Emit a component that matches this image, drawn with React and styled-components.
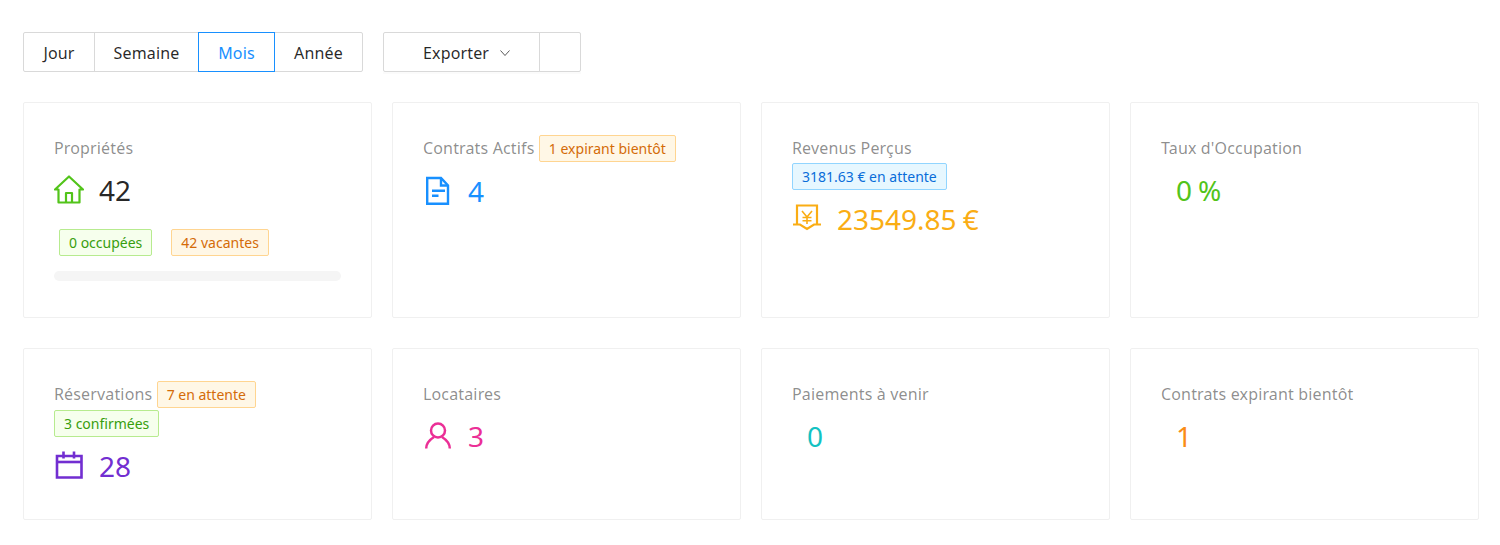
import styled, { createGlobalStyle } from "styled-components";

const GlobalStyle = createGlobalStyle`
  body {
    margin: 0;
    background: #fff;
    font-family: "Noto Sans", "Open Sans", sans-serif;
    font-size: 16px;
    letter-spacing: 0.15px;
    color: rgba(0, 0, 0, 0.85);
  }
`

const Page = styled.div`
  padding: 32px 21px 24px 23px;
`

const Toolbar = styled.div`
  display: flex;
  gap: 20px;
  margin-bottom: 30px;
`

const RadioGroup = styled.div`
  display: flex;
  height: 40px;
`

const RadioButton = styled.div`
  box-sizing: border-box;
  display: flex;
  align-items: center;
  justify-content: center;
  width: ${p => p.$width}px;
  margin-left: -1px;
  padding-top: 2px;
  border: 1px solid ${p => p.$active ? "#1890ff" : "#d9d9d9"};
  color: ${p => p.$active ? "#1890ff" : "rgba(0, 0, 0, 0.85)"};
  background: #fff;
  z-index: ${p => p.$active ? 1 : 0};

  &:first-child {
    margin-left: 0;
    border-radius: 2px 0 0 2px;
  }

  &:last-child {
    border-radius: 0 2px 2px 0;
  }
`

const ExportGroup = styled.div`
  display: flex;
  height: 40px;
  box-shadow: 0 2px 0 rgba(0, 0, 0, 0.015);
`

const ExportButton = styled.div`
  box-sizing: border-box;
  display: flex;
  align-items: center;
  gap: 10px;
  width: 157px;
  padding: 2px 0 0 39px;
  border: 1px solid #d9d9d9;
  border-radius: 2px 0 0 2px;
`

const ExportExtra = styled.div`
  box-sizing: border-box;
  width: 42px;
  margin-left: -1px;
  border: 1px solid #d9d9d9;
  border-radius: 0 2px 2px 0;
`

const Grid = styled.div`
  display: grid;
  grid-template-columns: repeat(4, 349px);
  column-gap: 20px;
  row-gap: 30px;
`

const Card = styled.div`
  box-sizing: border-box;
  padding: 30px;
  border: 1px solid #f0f0f0;
  border-radius: 2px;
  height: ${p => p.$height}px;
`

const Title = styled.div`
  color: rgba(0, 0, 0, 0.45);
  padding-top: 1px;
  line-height: 28px;
  margin-bottom: 8px;
`

const Tag = styled.span`
  box-sizing: border-box;
  display: inline-block;
  height: 27px;
  line-height: 25px;
  padding: 0 9px;
  margin: 1px 8px 1px 0;
  font-size: 14px;
  letter-spacing: 0;
  border: 1px solid ${p => p.$border};
  border-radius: 2px;
  background: ${p => p.$bg};
  color: ${p => p.$color};
  vertical-align: top;
`

const OrangeTag = styled(Tag).attrs({ $border: "#ffd591", $bg: "#fff7e6", $color: "#d46b08" })``
const GreenTag = styled(Tag).attrs({ $border: "#b7eb8f", $bg: "#f6ffed", $color: "#389e0d" })``
const BlueTag = styled(Tag).attrs({ $border: "#91d5ff", $bg: "#e6f7ff", $color: "#096dd9" })``

const Value = styled.div`
  display: flex;
  align-items: center;
  height: 40px;
  margin-bottom: 2px;
  font-size: 28px;
  letter-spacing: 0;
  color: ${p => p.$color};
`

const Prefix = styled.span`
  display: inline-flex;
  margin-right: 15px;
  color: ${p => p.$color || "inherit"};
`

const Unit = styled.span`
  margin-left: 6px;
`

const TagRow = styled.div`
  display: flex;
  gap: 19px;
  margin: 19px 0 15px 5px;

  ${Tag} {
    margin: 0;
  }
`

const Progress = styled.div`
  height: 10px;
  border-radius: 100px;
  background: #f5f5f5;
`

const HomeIcon = () => (
  <svg width="30" height="30" viewBox="0 0 30 30" fill="none" stroke="currentColor" strokeWidth="2.2" strokeLinejoin="round">
    <path d="M15 1.5 L29 14.5 H25.5 V27.5 H4.5 V14.5 H1 Z" />
    <path d="M12 27.5 V18 H18 V27.5" />
  </svg>
)

const FileIcon = () => (
  <svg width="30" height="30" viewBox="0 0 30 30" fill="none" stroke="currentColor" strokeWidth="2.4">
    <path d="M4.2 2 H18 L25 9.5 V27.8 H4.2 Z" />
    <path d="M18 2 V9.5 H25" />
    <path d="M9 14.7 H22 M9 19.7 H15.5" />
  </svg>
)

const YenIcon = () => (
  <svg width="30" height="30" viewBox="0 0 30 30" fill="none" stroke="currentColor" strokeWidth="2.2">
    <path d="M5 20.5 V1.5 H25 V20.5" />
    <path d="M1 20.5 H8 L15 25 L22 20.5 H29" />
    <path d="M10 7 L15 13 L20 7 M15 13 V20 M10.5 13.5 H19.5 M10.5 16.8 H19.5" strokeWidth="1.6" />
  </svg>
)

const CalendarIcon = () => (
  <svg width="30" height="30" viewBox="0 0 30 30" fill="none" stroke="currentColor" strokeWidth="2.6">
    <path d="M3 5 H27.5 V26.5 H3 Z" />
    <path d="M3 11 H27.5" />
    <path d="M9.5 0.5 V7.5 M20 0.5 V7.5" />
  </svg>
)

const UserIcon = () => (
  <svg width="30" height="30" viewBox="0 0 30 30" fill="none" stroke="currentColor" strokeWidth="2.5">
    <circle cx="15" cy="9.5" r="7" />
    <path d="M3.2 27.5 C3.2 22 7 18.5 11 16 M26.8 27.5 C26.8 22 23 18.5 19 16" />
  </svg>
)

export default function App() {
  return (
    <Page>
      <GlobalStyle />
      <Toolbar>
        <RadioGroup>
          <RadioButton $width={72}>Jour</RadioButton>
          <RadioButton $width={105}>Semaine</RadioButton>
          <RadioButton $width={77} $active>Mois</RadioButton>
          <RadioButton $width={89}>Année</RadioButton>
        </RadioGroup>
        <ExportGroup>
          <ExportButton>
            Exporter
            <svg width="12" height="12" viewBox="0 0 12 12" fill="none" stroke="rgba(0,0,0,0.65)" strokeWidth="1">
              <path d="M1.5 3.5 L6 8.5 L10.5 3.5" />
            </svg>
          </ExportButton>
          <ExportExtra />
        </ExportGroup>
      </Toolbar>
      <Grid>
        <Card $height={216}>
          <Title>Propriétés</Title>
          <Value $color="rgba(0, 0, 0, 0.85)">
            <Prefix $color="#52c41a"><HomeIcon /></Prefix>
            42
          </Value>
          <TagRow>
            <GreenTag>0 occupées</GreenTag>
            <OrangeTag>42 vacantes</OrangeTag>
          </TagRow>
          <Progress />
        </Card>
        <Card $height={216}>
          <Title>Contrats Actifs <OrangeTag>1 expirant bientôt</OrangeTag></Title>
          <Value $color="#1890ff"><Prefix><FileIcon /></Prefix>4</Value>
        </Card>
        <Card $height={216}>
          <Title>Revenus Perçus<br /><BlueTag>3181.63 € en attente</BlueTag></Title>
          <Value $color="#faad14"><Prefix><YenIcon /></Prefix>23549.85<Unit>€</Unit></Value>
        </Card>
        <Card $height={216}>
          <Title>Taux d'Occupation</Title>
          <Value $color="#52c41a"><Prefix />0<Unit>%</Unit></Value>
        </Card>
        <Card $height={172}>
          <Title>Réservations <OrangeTag>7 en attente</OrangeTag> <GreenTag>3 confirmées</GreenTag></Title>
          <Value $color="#722ed1"><Prefix><CalendarIcon /></Prefix>28</Value>
        </Card>
        <Card $height={172}>
          <Title>Locataires</Title>
          <Value $color="#eb2f96"><Prefix><UserIcon /></Prefix>3</Value>
        </Card>
        <Card $height={172}>
          <Title>Paiements à venir</Title>
          <Value $color="#13c2c2"><Prefix />0</Value>
        </Card>
        <Card $height={172}>
          <Title>Contrats expirant bientôt</Title>
          <Value $color="#fa8c16"><Prefix />1</Value>
        </Card>
      </Grid>
    </Page>
  )
}
